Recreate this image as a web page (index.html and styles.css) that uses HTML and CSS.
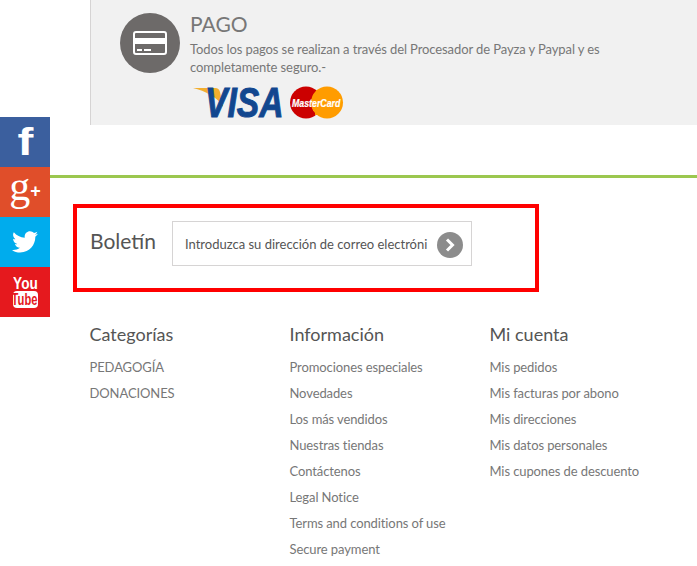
FILE: index.html
```html
<!DOCTYPE html>
<html lang="es">
<head>
    <meta charset="UTF-8">
    <meta name="viewport" content="width=device-width, initial-scale=1.0">
    <title>Boletín</title>
    <link rel="stylesheet" href="styles.css">
</head>
<body>
    <div class="social">
        <a class="social-item facebook"><span>f</span></a>
        <a class="social-item google"><span class="g">g</span><span class="plus">+</span></a>
        <a class="social-item twitter">
            <svg width="26" height="22" viewBox="0 0 24 20">
                <path fill="#fff" d="M24 2.400c-.9.4-1.800.7-2.800.8 1-.6 1.800-1.600 2.200-2.700-1 .6-2 1-3.100 1.200C19.300.7 18 0 16.600 0c-2.700 0-4.900 2.200-4.900 4.900 0 .4 0 .8.100 1.100C7.700 5.800 4.100 3.800 1.700.9 1.200 1.600 1 2.500 1 3.400c0 1.700.9 3.200 2.200 4.100-.8 0-1.600-.2-2.200-.6v.1c0 2.400 1.700 4.400 3.900 4.800-.4.100-.8.200-1.300.2-.3 0-.6 0-.9-.1.600 2 2.400 3.400 4.600 3.400-1.700 1.300-3.800 2.100-6.100 2.100-.4 0-.8 0-1.200-.1C2.200 18.900 4.800 19.700 7.500 19.700c9.100 0 14-7.500 14-14v-.6c1-.7 1.800-1.600 2.500-2.700z"/>
            </svg>
        </a>
        <a class="social-item youtube">
            <span class="you">You</span>
            <span class="tube"><span>Tube</span></span>
        </a>
    </div>

    <section class="payment">
        <div class="payment-icon">
            <svg width="34" height="24" viewBox="0 0 34 24">
                <rect x="1" y="1" width="32" height="22" rx="2" fill="none" stroke="#fff" stroke-width="2"/>
                <rect x="1" y="7" width="32" height="6" fill="#fff"/>
                <rect x="4" y="18" width="5" height="2" fill="#fff"/>
                <rect x="11" y="18" width="7" height="2" fill="#fff"/>
            </svg>
        </div>
        <div class="payment-body">
            <h3>PAGO</h3>
            <p>Todos los pagos se realizan a través del Procesador de Payza y Paypal y es completamente seguro.-</p>
            <div class="cards">
                <svg width="92" height="46" viewBox="0 0 92 46">
                    <path fill="#f2ae2e" d="M0 9h22c3 0 4 1 5 4l3 15C25 18 12 12 0 9z"/>
                    <text transform="translate(12 38) scale(0.8 1)" class="visa-text">VISA</text>
                </svg>
                <svg width="54" height="46" viewBox="0 0 54 46">
                    <circle cx="16" cy="23.500" r="16" fill="#cc0000"/>
                    <circle cx="37" cy="23.500" r="16" fill="#ff9c00"/>
                    <path fill="#ff9c00" d="M26 11h5v2h-5zM24 15h6v2h-6zM23 30h7v2h-7zM25 34h5v2h-5z"/>
                    <text transform="translate(2 27.500) scale(0.8 1)" class="mc-text">MasterCard</text>
                </svg>
            </div>
        </div>
    </section>

    <footer class="footer">
        <div class="newsletter">
            <h4>Boletín</h4>
            <div class="news-input">
                <span>Introduzca su dirección de correo electróni</span>
                <span class="news-go">
                    <svg width="14" height="16" viewBox="0 0 14 16">
                        <path d="M4 2.500l5.500 5.500-5.500 5.500" fill="none" stroke="#fff" stroke-width="3"/>
                    </svg>
                </span>
            </div>
        </div>

        <div class="links">
            <div class="link-col">
                <h4>Categorías</h4>
                <ul>
                    <li>PEDAGOGÍA</li>
                    <li>DONACIONES</li>
                </ul>
            </div>
            <div class="link-col">
                <h4>Información</h4>
                <ul>
                    <li>Promociones especiales</li>
                    <li>Novedades</li>
                    <li>Los más vendidos</li>
                    <li>Nuestras tiendas</li>
                    <li>Contáctenos</li>
                    <li>Legal Notice</li>
                    <li>Terms and conditions of use</li>
                    <li>Secure payment</li>
                </ul>
            </div>
            <div class="link-col">
                <h4>Mi cuenta</h4>
                <ul>
                    <li>Mis pedidos</li>
                    <li>Mis facturas por abono</li>
                    <li>Mis direcciones</li>
                    <li>Mis datos personales</li>
                    <li>Mis cupones de descuento</li>
                </ul>
            </div>
        </div>
    </footer>
</body>
</html>
```

FILE: styles.css
```css
* {
    box-sizing: border-box;
    margin: 0;
    padding: 0;
}

html,
body {
    height: 566px;
    overflow: hidden;
}

body {
    font-family: 'Lato', sans-serif;
    background: #fff;
    color: #777;
    font-size: 13px;
    letter-spacing: -0.1px;
}

/* side bar */
.social {
    position: absolute;
    left: 0;
    top: 117px;
    width: 50px;
    letter-spacing: 0;
}

.social-item {
    display: flex;
    flex-direction: column;
    align-items: center;
    justify-content: center;
    height: 50px;
    color: #fff;
}

.facebook {
    background: #3b5f9e;
    font-family: 'Liberation Sans', sans-serif;
    font-weight: 700;
    font-size: 38px;
    line-height: 50px;
}

.facebook span {
    transform: scaleX(1.25);
}

.google {
    background: #e04e2a;
    flex-direction: row;
    font-family: 'Liberation Serif', serif;
}

.google .g {
    font-size: 42px;
    line-height: 42px;
    margin-top: -12px;
}

.google .plus {
    font-family: 'Liberation Sans', sans-serif;
    font-weight: 700;
    font-size: 18px;
    line-height: 18px;
    margin-top: -2px;
}

.twitter {
    background: #00aced;
}

.youtube {
    background: #e5191e;
    font-family: 'Liberation Sans', sans-serif;
    font-weight: 700;
}

.you {
    font-size: 17px;
    line-height: 14px;
    transform: scaleX(0.8);
}

.tube {
    display: flex;
    justify-content: center;
    width: 25px;
    height: 17px;
    font-size: 16px;
    line-height: 17px;
    background: #fff;
    color: #e5191e;
    border-radius: 4px;
}

.tube span {
    transform: scaleX(0.7);
}

/* payment panel */
.payment {
    display: flex;
    gap: 10px;
    height: 125px;
    margin-left: 90px;
    padding: 13px 0 0 29px;
    background: #f1f1f1;
    border-left: 1px solid #d6d4d4;
}

.payment-icon {
    display: flex;
    flex: none;
    align-items: center;
    justify-content: center;
    width: 60px;
    height: 60px;
    border-radius: 50%;
    background: #6d6a69;
}

.payment-body {
    width: 420px;
}

.payment-body h3 {
    font-size: 21px;
    font-weight: 400;
    line-height: 22px;
    letter-spacing: 0;
}

.payment-body p {
    margin-top: 5px;
    line-height: 18px;
    color: #777;
}

.cards {
    display: flex;
    gap: 5px;
    margin: 3px 0 0 3px;
}

.visa-text {
    font-family: 'Liberation Sans', sans-serif;
    font-style: italic;
    font-weight: 700;
    font-size: 42px;
    letter-spacing: 0;
    fill: #12478f;
    stroke: #12478f;
    stroke-width: 1px;
}

.mc-text {
    font-family: 'Liberation Sans', sans-serif;
    font-style: italic;
    font-weight: 700;
    font-size: 11px;
    letter-spacing: 0;
    fill: #fff;
    stroke: #fff;
    stroke-width: 0.2px;
}

/* footer */
.footer {
    margin-top: 50px;
    padding: 26px 0 0 73px;
    border-top: 3px solid #9bc74f;
}

.newsletter {
    display: flex;
    align-items: flex-start;
    width: 466px;
    height: 88px;
    padding: 13px 0 0 13px;
    border: 4px solid #f00;
}

.newsletter h4 {
    width: 82px;
    margin: 7px 0 0 0;
    font-size: 21px;
    font-weight: 400;
    line-height: 26px;
    letter-spacing: 0;
    color: #555;
}

.news-input {
    display: flex;
    align-items: center;
    justify-content: space-between;
    width: 300px;
    height: 45px;
    padding: 0 8px 0 12px;
    border: 1px solid #d6d4d4;
    color: #555;
    letter-spacing: 0;
    white-space: nowrap;
}

.news-go {
    display: flex;
    align-items: center;
    justify-content: center;
    width: 26px;
    height: 26px;
    margin-top: 3px;
    border-radius: 50%;
    background: #8c8c8c;
}

.links {
    display: flex;
    margin-top: 29px;
    padding-left: 16.500px;
}

.link-col {
    width: 200px;
}

.link-col h4 {
    font-size: 18px;
    font-weight: 400;
    line-height: 26px;
    letter-spacing: 0;
    color: #555;
}

.link-col ul {
    list-style: none;
    margin-top: 7px;
}

.link-col li {
    line-height: 26px;
    white-space: nowrap;
}
```
